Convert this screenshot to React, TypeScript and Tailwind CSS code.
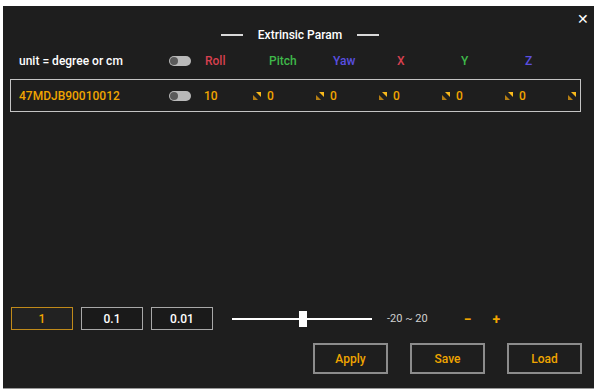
import React from "react";

const font = { fontFamily: "Roboto, 'Noto Sans', sans-serif" };

function Toggle() {
  return (
    <div className="relative h-[10px] w-[22px] shrink-0 rounded-full bg-[#b9b9b9]">
      <div className="absolute left-[1px] top-[1px] h-[8px] w-[8px] rounded-full bg-[#5a5a5a]" />
    </div>
  );
}

function Spin() {
  return (
    <svg width="8" height="8" viewBox="0 0 8 8" className="shrink-0">
      <path d="M3 0 L8 0 L8 5 Z" fill="#f7b81c" />
      <path d="M0 3 L0 8 L5 8 Z" fill="#b57e12" />
    </svg>
  );
}

const heads = [
  { t: "Roll", c: "text-[#d7404f]" },
  { t: "Pitch", c: "text-[#3fb84a]" },
  { t: "Yaw", c: "text-[#5a4fe0]" },
  { t: "X", c: "text-[#d7404f]" },
  { t: "Y", c: "text-[#3fb84a]" },
  { t: "Z", c: "text-[#5a4fe0]" },
];

export default function App() {
  return (
    <div className="h-[392px] w-[601px] bg-white pl-[3px] pt-[6px]" style={font}>
      <div className="relative flex h-[383px] w-[591px] flex-col border-b border-[#9a9a9a] bg-[#1e1e1e] text-[12px] font-medium text-white">
        <button className="absolute right-[5px] top-[6px] text-[14px] leading-none text-white">✕</button>

        <div className="mt-[22px] flex h-[14px] items-center justify-center gap-[15px] pl-[3px]">
          <div className="h-[2px] w-[22px] bg-[#d8d8d8]" />
          <span className="leading-none">Extrinsic Param</span>
          <div className="h-[2px] w-[22px] bg-[#d8d8d8]" />
        </div>

        <div className="mt-[12px] flex h-[14px] items-center pl-[16px]">
          <span className="w-[150px] leading-none">unit = degree or cm</span>
          <Toggle />
          <div className="ml-[14px] flex">
            {heads.map((h) => (
              <span key={h.t} className={`w-[64px] leading-none ${h.c}`}>
                {h.t}
              </span>
            ))}
          </div>
        </div>

        <div className="ml-[7px] mt-[11px] flex h-[33px] w-[571px] items-center border border-[#c4c4c4] pl-[8px] text-[#f0a500]">
          <span className="w-[150px] leading-none">47MDJB90010012</span>
          <Toggle />
          <span className="ml-[13px] w-[49px] leading-none">10</span>
          {[0, 1, 2, 3, 4].map((i) => (
            <div key={i} className="flex w-[63px] items-center gap-[6px]">
              <Spin />
              <span className="leading-none">0</span>
            </div>
          ))}
          <Spin />
        </div>

        <div className="flex-1" />

        <div className="flex h-[23px] items-center pl-[8px]">
          <button className="h-[23px] w-[62px] border border-[#c08a1a] bg-[#222] leading-none text-[#f0a500]">1</button>
          <button className="ml-[8px] h-[23px] w-[62px] border border-[#a8a8a8] bg-[#1a1a1a] leading-none">0.1</button>
          <button className="ml-[8px] h-[23px] w-[62px] border border-[#a8a8a8] bg-[#1a1a1a] leading-none">0.01</button>
          <div className="relative ml-[19px] flex h-[16px] w-[140px] items-center">
            <div className="h-[2px] w-full bg-white" />
            <div className="absolute left-[67px] top-0 h-[16px] w-[8px] bg-white" />
          </div>
          <span className="ml-[15px] text-[11px] font-normal leading-none text-[#d0d0d0]">-20 ~ 20</span>
          <span className="ml-[36px] text-[14px] font-bold leading-none text-[#f0a500]">−</span>
          <span className="ml-[21px] text-[14px] font-bold leading-none text-[#f0a500]">+</span>
        </div>

        <div className="mb-[14px] mt-[13px] flex justify-end gap-[22px] pr-[12px]">
          {["Apply", "Save", "Load"].map((b) => (
            <button
              key={b}
              className="h-[31px] w-[75px] border-2 border-[#8c8c8c] bg-[#1e1e1e] leading-none text-[#f0a500]"
            >
              {b}
            </button>
          ))}
        </div>
      </div>
    </div>
  );
}
